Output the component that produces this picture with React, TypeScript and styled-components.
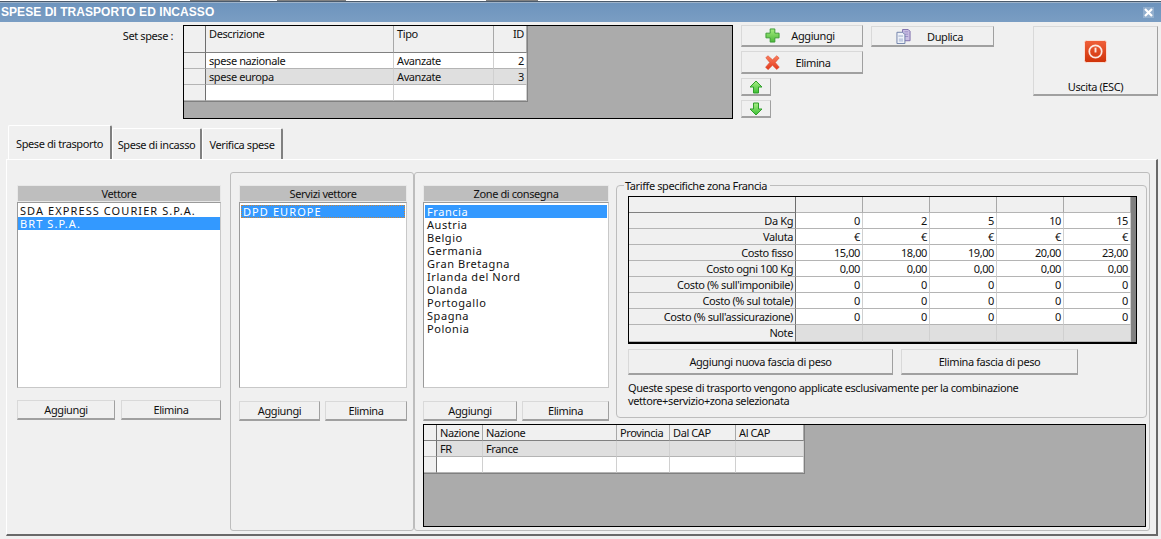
import React from "react";
import styled, { createGlobalStyle } from "styled-components";

const GlobalStyle = createGlobalStyle`
  html, body {
    margin: 0;
    padding: 0;
    background: #f0f0f0;
    overflow: hidden;
  }
  body {
    font-family: "Noto Sans", "DejaVu Sans", sans-serif;
    font-size: 11px;
    letter-spacing: -0.4px;
    color: #111;
  }
`;

const Window = styled.div`
  width: 1161px;
  height: 539px;
  background: #f0f0f0;
  display: flex;
  flex-direction: column;
  overflow: hidden;
`;

/* fragments of the window behind, cut off by the dialog edge */
const TopStrip = styled.div`
  height: 3px;
  flex: none;
  background:
    linear-gradient(#808080, #808080) 190px 0 / 50px 1px no-repeat,
    linear-gradient(#808080, #808080) 277px 0 / 69px 1px no-repeat,
    linear-gradient(#808080, #808080) 486px 0 / 52px 1px no-repeat,
    linear-gradient(#fff 0 1px, #4a5a6c 1px 2px, #9fb3c9 2px);
`;

const TitleBar = styled.div`
  height: 19px;
  flex: none;
  background: linear-gradient(#6d94bd, #7a9dc3);
  color: #fff;
  font-family: "Liberation Sans", sans-serif;
  font-weight: bold;
  font-size: 12px;
  letter-spacing: 0.05px;
  line-height: 19px;
  padding: 0 0 0 1px;
  display: flex;
  justify-content: space-between;
  align-items: center;
`;

const CloseBox = styled.div`
  width: 11px;
  height: 11px;
  margin-right: 7px;
  background: rgba(255, 255, 255, 0.22);
  display: flex;
  align-items: center;
  justify-content: center;
`;

const TopArea = styled.div`
  height: 103px;
  flex: none;
  display: flex;
  padding-top: 3px;
  box-sizing: border-box;
`;

const SetLabel = styled.div`
  width: 173px;
  flex: none;
  text-align: right;
  padding-top: 3px;
  margin-right: 10px;
  box-sizing: border-box;
`;

const Grid = styled.div<{ $w: number; $h: number }>`
  width: ${(p) => p.$w}px;
  height: ${(p) => p.$h}px;
  flex: none;
  box-sizing: border-box;
  background: #ababab;
  border: 1px solid #000;
`;

const GridTable = styled.div<{ $cols: string; $w: number }>`
  display: grid;
  grid-template-columns: ${(p) => p.$cols};
  width: ${(p) => p.$w}px;
  border-right: 1px solid #808080;
  border-bottom: 1px solid #808080;
`;

const Cell = styled.div<{
  $h?: number;
  $kind?: "head" | "row" | "alt" | "data";
  $right?: boolean;
  $top?: boolean;
}>`
  height: ${(p) => p.$h ?? 16}px;
  line-height: ${(p) => (p.$h ?? 16) - 1}px;
  box-sizing: border-box;
  padding: 0 2px 0 3px;
  white-space: nowrap;
  overflow: hidden;
  text-align: ${(p) => (p.$right ? "right" : "left")};
  background: ${(p) =>
    p.$kind === "head" ? "#f0f0f0" : p.$kind === "alt" ? "#dfdfdf" : p.$kind === "row" ? "#f0f0f0" : "#fff"};
  border-right: 1px solid ${(p) => (p.$kind === "head" || p.$kind === "row" ? "#a8a8a8" : "#d0d0d0")};
  border-bottom: 1px solid ${(p) => (p.$kind === "head" ? "#808080" : "#b4b4b4")};
  ${(p) => (p.$top ? "line-height: 13px; padding-top: 1px;" : "")}
`;

const IndicatorCell = styled(Cell)`
  padding: 0 2px 0 0;
  border-right: 1px solid #6e6e6e;
`;

const ButtonColumn = styled.div`
  margin-left: 8px;
  width: 122px;
  flex: none;
  display: flex;
  flex-direction: column;
`;

const ActionButton = styled.div<{
  $w?: number;
  $h?: number;
  $gap?: number;
  $stack?: boolean;
}>`
  width: ${(p) => (p.$w ? `${p.$w}px` : "100%")};
  height: ${(p) => p.$h ?? 22}px;
  margin-bottom: ${(p) => p.$gap ?? 0}px;
  flex: none;
  box-sizing: border-box;
  background: #f0f0f0;
  border: 1px solid #d9d9d9;
  border-right-color: #a0a0a0;
  border-bottom: 2px solid #a0a0a0;
  display: flex;
  flex-direction: ${(p) => (p.$stack ? "column" : "row")};
  align-items: center;
  justify-content: center;
  white-space: nowrap;
  color: #111;
`;

const IconSlot = styled.span<{ $w: number; $pad?: number }>`
  width: ${(p) => p.$w}px;
  box-sizing: border-box;
  flex: none;
  display: flex;
  justify-content: flex-end;
  padding-right: ${(p) => p.$pad ?? 0}px;
`;

const CaptionSlot = styled.span`
  width: 56px;
  flex: none;
  text-align: center;
`;

const DuplicaWrap = styled.div`
  margin-left: 8px;
  width: 123px;
  flex: none;
  padding-top: 1px;
`;

const ExitWrap = styled.div`
  margin-left: 39px;
  width: 125px;
  flex: none;
  padding-top: 1px;
`;

const ExitIcon = styled.div`
  height: 52px;
  flex: none;
  display: flex;
  align-items: flex-end;
  padding-bottom: 16px;
  box-sizing: border-box;
`;

const TabStrip = styled.div`
  height: 34px;
  flex: none;
  display: flex;
  align-items: flex-end;
  padding-left: 8px;
`;

const Tab = styled.div<{ $active?: boolean; $w: number }>`
  width: ${(p) => p.$w}px;
  height: ${(p) => (p.$active ? 34 : 31)}px;
  box-sizing: border-box;
  flex: none;
  background: #f0f0f0;
  border: 1px solid #fff;
  border-bottom: none;
  border-right: 2px solid #808080;
  border-radius: 2px 2px 0 0;
  text-align: center;
  line-height: ${(p) => (p.$active ? 35 : 31)}px;
`;

const Pane = styled.div`
  margin-left: 6px;
  width: 1152px;
  height: 377px;
  flex: none;
  box-sizing: border-box;
  border-top: 1px solid #fff;
  border-left: 1px solid #fff;
  border-right: 2px solid #696969;
  border-bottom: 2px solid #696969;
  display: flex;
  align-items: flex-start;
  padding-top: 12px;
`;

const CarrierColumn = styled.div`
  width: 204px;
  flex: none;
  margin: 13px 9px 0 10px;
`;

const GroupPanel = styled.div<{ $w: number }>`
  width: ${(p) => p.$w}px;
  height: 359px;
  flex: none;
  box-sizing: border-box;
  border: 1px solid #bdbdbd;
  border-radius: 3px;
  padding: 12px 6px 0 8px;
`;

const ZonePanel = styled(GroupPanel)`
  padding-right: 0;
  display: grid;
  grid-template-columns: 186px 1fr;
  grid-template-rows: 239px 103px;
  column-gap: 7px;
`;

const ListHead = styled.div`
  height: 17px;
  background: #bebebe;
  border: 1px solid #e8e8e8;
  box-sizing: border-box;
  text-align: center;
  line-height: 15px;
  color: #111;
`;

const ListBox = styled.div<{ $inset?: boolean }>`
  height: 186px;
  box-sizing: border-box;
  background: #fff;
  border: 1px solid #9a9a9a;
  border-right-color: #c8c8c8;
  border-bottom-color: #c8c8c8;
  padding: ${(p) => (p.$inset ? "2px 1px" : "1px 0 1px 0")};
  font-size: 11px;
  letter-spacing: 0.56px;
`;

const ListItem = styled.div<{ $selected?: boolean; $focus?: boolean; $caps?: boolean }>`
  height: 13px;
  line-height: 13px;
  padding-left: 2px;
  white-space: nowrap;
  color: ${(p) => (p.$selected ? "#fff" : "#111")};
  background: ${(p) => (p.$selected ? "#3399ff" : "transparent")};
  ${(p) => (p.$caps ? "letter-spacing: 1.08px;" : "")}
  ${(p) => (p.$focus ? "outline: 1px dotted #c8843c; outline-offset: -1px;" : "")}
`;

const ListButtons = styled.div<{ $top: number; $gap: number }>`
  display: flex;
  gap: ${(p) => p.$gap}px;
  margin-top: ${(p) => p.$top}px;
`;

const TariffBox = styled.fieldset`
  grid-column: 2;
  grid-row: 1;
  margin: -6px 0 0 0;
  width: 531px;
  height: 239px;
  box-sizing: border-box;
  border: 1px solid #bdbdbd;
  border-radius: 4px;
  padding: 0 0 0 11px;
  min-inline-size: 0;
`;

const TariffLegend = styled.legend`
  margin-left: -4px;
  padding: 0 3px 0 1px;
  line-height: 13px;
`;

const TariffGridFrame = styled.div`
  width: 509px;
  height: 148px;
  box-sizing: border-box;
  margin-top: 4px;
  background: #808080;
  border: 1px solid #000;
  border-bottom-width: 2px;
  padding-right: 5px;
`;

const TariffTable = styled.div`
  display: grid;
  grid-template-columns: 167px 67px 67px 67px 67px 67px;
`;

const TariffButtons = styled.div`
  display: flex;
  gap: 8px;
  margin-top: 5px;
`;

const Notice = styled.div`
  margin-top: 6px;
  line-height: 13px;
`;

const NationGrid = styled(Grid)`
  grid-column: 1 / span 2;
`;

const PlusIcon = () => (
  <svg width="15" height="15" viewBox="0 0 16 16">
    <defs>
      <linearGradient id="plusFill" x1="0" y1="0" x2="0" y2="1">
        <stop offset="0" stopColor="#a5ec7e" />
        <stop offset="1" stopColor="#4cb83a" />
      </linearGradient>
    </defs>
    <path
      d="M5.5 1h5v4.5H15v5h-4.5V15h-5v-4.5H1v-5h4.5z"
      fill="url(#plusFill)"
      stroke="#3a9a32"
      strokeWidth="1"
    />
  </svg>
);

const CrossIcon = () => (
  <svg width="15" height="15" viewBox="0 0 16 16">
    <defs>
      <linearGradient id="crossFill" x1="0" y1="0" x2="0" y2="1">
        <stop offset="0" stopColor="#fb7d5c" />
        <stop offset="1" stopColor="#e23a1c" />
      </linearGradient>
    </defs>
    <path
      d="M3 .8L8 5l4.5-4.2 2.6 2.3L11 8l4.2 5-2.7 2.4L8 11l-4.8 4.6L.6 13 5 8 .9 3z"
      fill="url(#crossFill)"
      stroke="#d9472a"
      strokeWidth=".6"
    />
  </svg>
);

const ArrowIcon = ({ down }: { down?: boolean }) => (
  <svg width="14" height="14" viewBox="0 0 14 14">
    <defs>
      <linearGradient id={down ? "arrowDown" : "arrowUp"} x1="0" y1="0" x2="0" y2="1">
        <stop offset="0" stopColor="#a9ee86" />
        <stop offset="1" stopColor="#3cc034" />
      </linearGradient>
    </defs>
    <path
      d={down ? "M4.5 1h5v6h3.5L7 13 1 7h3.5z" : "M7 1l6 6H9.5v6h-5V7H1z"}
      fill={`url(#${down ? "arrowDown" : "arrowUp"})`}
      stroke="#2f9e2a"
      strokeWidth="1"
    />
  </svg>
);

const DuplicateIcon = () => (
  <svg width="15" height="15" viewBox="0 0 16 16">
    <path d="M7 .5h6l2 2v10H7z" fill="#c9bfe3" stroke="#7d6cab" />
    <path d="M9 3h4M9 5.5h4M9 8h4" stroke="#9a8cc4" />
    <path d="M1 3.5h6l2.5 2.5v9.5H1z" fill="#eef1f8" stroke="#6d7fa8" />
    <path d="M3 10h4.5v3.5H3z" fill="#c2cde2" />
    <path d="M2.5 7.5h5" stroke="#9aa8c6" />
  </svg>
);

const PowerIcon = () => (
  <svg width="23" height="23" viewBox="0 0 24 24">
    <defs>
      <linearGradient id="powerFill" x1="0" y1="0" x2="0" y2="1">
        <stop offset="0" stopColor="#f0603a" />
        <stop offset="1" stopColor="#cf3208" />
      </linearGradient>
    </defs>
    <rect x=".5" y=".5" width="23" height="23" rx="2" fill="url(#powerFill)" stroke="#fbe3da" />
    <circle cx="12" cy="12" r="6.5" fill="none" stroke="#fbe9e2" strokeWidth="1.8" />
    <path d="M12 8v5" stroke="#fbe9e2" strokeWidth="2" />
  </svg>
);

const tariffRows: { label: string; values: string[] }[] = [
  { label: "Da Kg", values: ["0", "2", "5", "10", "15"] },
  { label: "Valuta", values: ["€", "€", "€", "€", "€"] },
  { label: "Costo fisso", values: ["15,00", "18,00", "19,00", "20,00", "23,00"] },
  { label: "Costo ogni 100 Kg", values: ["0,00", "0,00", "0,00", "0,00", "0,00"] },
  { label: "Costo (% sull'imponibile)", values: ["0", "0", "0", "0", "0"] },
  { label: "Costo (% sul totale)", values: ["0", "0", "0", "0", "0"] },
  { label: "Costo (% sull'assicurazione)", values: ["0", "0", "0", "0", "0"] },
];

const zones = [
  "Austria",
  "Belgio",
  "Germania",
  "Gran Bretagna",
  "Irlanda del Nord",
  "Olanda",
  "Portogallo",
  "Spagna",
  "Polonia",
];

const App: React.FC = () => {
  return (
    <Window>
      <GlobalStyle />
      <TopStrip />
      <TitleBar>
        SPESE DI TRASPORTO ED INCASSO
        <CloseBox>
          <svg width="9" height="9" viewBox="0 0 9 9">
            <path d="M1 1L8 8M8 1L1 8" stroke="#fff" strokeWidth="2.2" />
          </svg>
        </CloseBox>
      </TitleBar>

      <TopArea>
        <SetLabel>Set spese :</SetLabel>
        <Grid $w={550} $h={94}>
          <GridTable $cols="22px 188px 100px 33px" $w={343}>
            <IndicatorCell $h={27} $kind="head" />
            <Cell $h={27} $kind="head" $top>Descrizione</Cell>
            <Cell $h={27} $kind="head" $top>Tipo</Cell>
            <Cell $h={27} $kind="head" $top $right>ID</Cell>

            <IndicatorCell $kind="row" />
            <Cell>spese nazionale</Cell>
            <Cell>Avanzate</Cell>
            <Cell $right>2</Cell>

            <IndicatorCell $kind="row" />
            <Cell $kind="alt">spese europa</Cell>
            <Cell $kind="alt">Avanzate</Cell>
            <Cell $kind="alt" $right>3</Cell>

            <IndicatorCell $kind="row" />
            <Cell />
            <Cell />
            <Cell />
          </GridTable>
        </Grid>

        <ButtonColumn>
          <ActionButton $gap={4}>
            <IconSlot $w={43} $pad={5}><PlusIcon /></IconSlot>
            <CaptionSlot>Aggiungi</CaptionSlot>
            <IconSlot $w={21} />
          </ActionButton>
          <ActionButton $h={23} $gap={4}>
            <IconSlot $w={43} $pad={5}><CrossIcon /></IconSlot>
            <CaptionSlot>Elimina</CaptionSlot>
            <IconSlot $w={21} />
          </ActionButton>
          <ActionButton $w={30} $h={18} $gap={4}><ArrowIcon /></ActionButton>
          <ActionButton $w={30} $h={18}><ArrowIcon down /></ActionButton>
        </ButtonColumn>

        <DuplicaWrap>
          <ActionButton $h={21}>
            <IconSlot $w={45} $pad={6}><DuplicateIcon /></IconSlot>
            <CaptionSlot>Duplica</CaptionSlot>
            <IconSlot $w={20} />
          </ActionButton>
        </DuplicaWrap>

        <ExitWrap>
          <ActionButton $h={70} $stack>
            <ExitIcon><PowerIcon /></ExitIcon>
            Uscita (ESC)
          </ActionButton>
        </ExitWrap>
      </TopArea>

      <TabStrip>
        <Tab $active $w={104}>Spese di trasporto</Tab>
        <Tab $w={90}>Spese di incasso</Tab>
        <Tab $w={81}>Verifica spese</Tab>
      </TabStrip>

      <Pane>
        <CarrierColumn>
          <ListHead>Vettore</ListHead>
          <ListBox>
            <ListItem $caps>SDA EXPRESS COURIER S.P.A.</ListItem>
            <ListItem $caps $selected>BRT S.P.A.</ListItem>
          </ListBox>
          <ListButtons $top={12} $gap={6}>
            <ActionButton $w={98} $h={20}>Aggiungi</ActionButton>
            <ActionButton $w={100} $h={20}>Elimina</ActionButton>
          </ListButtons>
        </CarrierColumn>

        <GroupPanel $w={184}>
          <ListHead>Servizi vettore</ListHead>
          <ListBox $inset>
            <ListItem $caps $selected $focus>DPD EUROPE</ListItem>
          </ListBox>
          <ListButtons $top={13} $gap={5}>
            <ActionButton $w={81} $h={20}>Aggiungi</ActionButton>
            <ActionButton $w={82} $h={20}>Elimina</ActionButton>
          </ListButtons>
        </GroupPanel>

        <ZonePanel $w={736}>
          <div>
            <ListHead>Zone di consegna</ListHead>
            <ListBox $inset>
              <ListItem $selected>Francia</ListItem>
              {zones.map((z) => (
                <ListItem key={z}>{z}</ListItem>
              ))}
            </ListBox>
            <ListButtons $top={13} $gap={5}>
              <ActionButton $w={94} $h={20}>Aggiungi</ActionButton>
              <ActionButton $w={87} $h={20}>Elimina</ActionButton>
            </ListButtons>
          </div>

          <TariffBox>
            <TariffLegend>Tariffe specifiche zona Francia</TariffLegend>
            <TariffGridFrame>
              <TariffTable>
                <IndicatorCell $kind="head" $right />
                {[0, 1, 2, 3, 4].map((i) => (
                  <Cell key={i} $kind="row" />
                ))}
                {tariffRows.map((r) => (
                  <React.Fragment key={r.label}>
                    <IndicatorCell $kind="row" $right>{r.label}</IndicatorCell>
                    {r.values.map((v, i) => (
                      <Cell key={i} $right>{v}</Cell>
                    ))}
                  </React.Fragment>
                ))}
                <IndicatorCell $kind="row" $right $h={17}>Note</IndicatorCell>
                {[0, 1, 2, 3, 4].map((i) => (
                  <Cell key={i} $kind="alt" $h={17} />
                ))}
              </TariffTable>
            </TariffGridFrame>
            <TariffButtons>
              <ActionButton $w={265} $h={26}>Aggiungi nuova fascia di peso</ActionButton>
              <ActionButton $w={177} $h={26}>Elimina fascia di peso</ActionButton>
            </TariffButtons>
            <Notice>
              Queste spese di trasporto vengono applicate esclusivamente per la combinazione
              <br />
              vettore+servizio+zona selezionata
            </Notice>
          </TariffBox>

          <NationGrid $w={723} $h={103}>
            <GridTable $cols="13px 46px 134px 53px 66px 68px" $w={380}>
              <IndicatorCell $kind="head" />
              <Cell $kind="head">Nazione</Cell>
              <Cell $kind="head">Nazione</Cell>
              <Cell $kind="head">Provincia</Cell>
              <Cell $kind="head">Dal CAP</Cell>
              <Cell $kind="head">Al CAP</Cell>

              <IndicatorCell $kind="row" />
              <Cell $kind="alt">FR</Cell>
              <Cell $kind="alt">France</Cell>
              <Cell $kind="alt" />
              <Cell $kind="alt" />
              <Cell $kind="alt" />

              <IndicatorCell $kind="row" />
              <Cell />
              <Cell />
              <Cell />
              <Cell />
              <Cell />
            </GridTable>
          </NationGrid>
        </ZonePanel>
      </Pane>
    </Window>
  );
};

export default App;
